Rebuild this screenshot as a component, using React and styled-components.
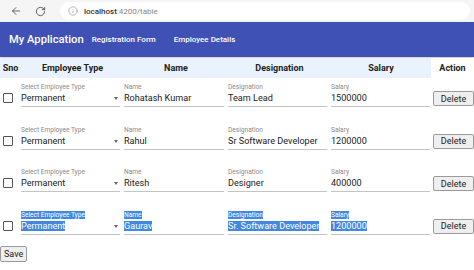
import { createGlobalStyle } from 'styled-components';
import styled from 'styled-components';
import { ArrowLeft, RotateCw, Info } from 'lucide-react';

const GlobalStyle = createGlobalStyle`
  body {
    margin: 0;
    font-family: Roboto, "Liberation Sans", sans-serif;
    background: #fff;
  }
`;

const BrowserBar = styled.div`
  height: 22px;
  display: flex;
  align-items: center;
  background: #f5f5f5;
  color: #444;
`;

const NavIcon = styled.span`
  display: flex;
  width: 25px;
  justify-content: center;
  margin-left: ${({ first }) => (first ? '3px' : '0')};
`;

const AddressBar = styled.div`
  flex: 1;
  height: 18px;
  margin: 0 4px 0 7px;
  border-radius: 9px;
  background: #fff;
  display: flex;
  align-items: center;
  padding-left: 8px;
  gap: 6px;
  font-size: 8px;
  color: #888;
`;

const Host = styled.span`
  color: #333;
  font-weight: 500;
`;

const Toolbar = styled.header`
  height: 35px;
  background: #3f51b5;
  display: flex;
  align-items: center;
  padding-left: 9px;
  color: #fff;
  box-shadow: 0 1px 2px rgba(0, 0, 0, 0.25);
`;

const Title = styled.span`
  font-size: 11.2px;
  font-weight: 500;
  margin-right: 8px;
`;

const NavLink = styled.span`
  font-size: 8px;
  font-weight: 500;
  margin-right: 18px;
`;

const Row = styled.div`
  display: grid;
  grid-template-columns: 21px 103px 104px 103px 100px 43px;
  height: ${({ head }) => (head ? '20px' : '42.5px')};
  align-items: ${({ head }) => (head ? 'center' : 'start')};
  margin-top: ${({ head }) => (head ? '1px' : '0')};
`;

const HeadCell = styled.div`
  height: 20px;
  line-height: 20px;
  text-align: center;
  font-size: 9px;
  font-weight: 700;
  color: #222;
  background: ${({ plain }) => (plain ? '#fff' : '#eaf3fd')};
`;

const CheckBox = styled.span`
  display: block;
  width: 8px;
  height: 8px;
  margin: 15px 0 0 3px;
  border: 1px solid #555;
  border-radius: 1px;
`;

const Field = styled.div`
  width: ${({ w }) => w}px;
  padding-top: 5px;
  border-bottom: 1px solid #c4c4c4;
  height: 23px;
  position: relative;
`;

const Label = styled.div`
  font-size: 6.6px;
  line-height: 8px;
  height: 8px;
  color: #8a8a8a;
`;

const Value = styled.div`
  font-size: 9.1px;
  line-height: 12px;
  margin-top: 1px;
  color: #222;
`;

const Mark = styled.span`
  background: ${({ on }) => (on ? '#4287e0' : 'transparent')};
  color: ${({ on }) => (on ? '#fff' : 'inherit')};
`;

const Arrow = styled.span`
  position: absolute;
  right: 2px;
  top: 19px;
  border-left: 2.5px solid transparent;
  border-right: 2.5px solid transparent;
  border-top: 3px solid #666;
`;

const Button = styled.button`
  display: block;
  font-family: Roboto, "Liberation Sans", sans-serif;
  font-size: 9px;
  color: #222;
  background: #efefef;
  border: 1px solid #9a9a9a;
  border-radius: 2px;
  padding: 0 3px;
  height: ${({ h }) => h}px;
  margin: ${({ m }) => m};
`;

const employees = [
  { name: 'Rohatash Kumar', designation: 'Team Lead', salary: '1500000' },
  { name: 'Rahul', designation: 'Sr Software Developer', salary: '1200000' },
  { name: 'Ritesh', designation: 'Designer', salary: '400000' },
  { name: 'Gaurav', designation: 'Sr. Software Developer', salary: '1200000', selected: true },
];

const InputField = ({ w, label, value, on, select }) => (
  <Field w={w}>
    <Label><Mark on={on}>{label}</Mark></Label>
    <Value><Mark on={on}>{value}</Mark></Value>
    {select && <Arrow />}
  </Field>
);

export default function App() {
  return (
    <>
      <GlobalStyle />
      <BrowserBar>
        <NavIcon first><ArrowLeft size={12} strokeWidth={1.6} /></NavIcon>
        <NavIcon><RotateCw size={11} strokeWidth={1.8} /></NavIcon>
        <AddressBar>
          <Info size={10} strokeWidth={1.4} />
          <span><Host>localhost</Host>:4200/table</span>
        </AddressBar>
      </BrowserBar>
      <Toolbar>
        <Title>My Application</Title>
        <NavLink>Registration Form</NavLink>
        <NavLink>Employee Details</NavLink>
      </Toolbar>
      <Row head>
        <HeadCell>Sno</HeadCell>
        <HeadCell>Employee Type</HeadCell>
        <HeadCell>Name</HeadCell>
        <HeadCell>Designation</HeadCell>
        <HeadCell>Salary</HeadCell>
        <HeadCell plain>Action</HeadCell>
      </Row>
      {employees.map((e) => (
        <Row key={e.name}>
          <CheckBox />
          <InputField w={99} label="Select Employee Type" value="Permanent" on={e.selected} select />
          <InputField w={100} label="Name" value={e.name} on={e.selected} />
          <InputField w={99} label="Designation" value={e.designation} on={e.selected} />
          <InputField w={99} label="Salary" value={e.salary} on={e.selected} />
          <Button h={15} m="13px 0 0 2px">Delete</Button>
        </Row>
      ))}
      <Button h={16} m="-2px 0 0 0">Save</Button>
    </>
  );
}
